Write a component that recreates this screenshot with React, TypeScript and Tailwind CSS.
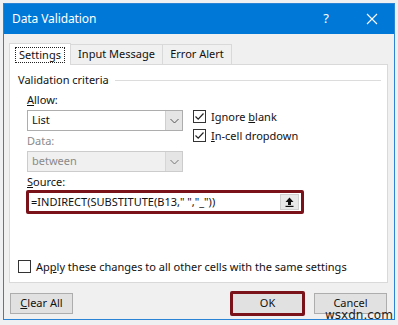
import React from 'react'

const font = { fontFamily: '"Noto Sans", "Open Sans", sans-serif' }

function Check({ checked }: { checked?: boolean }) {
  return (
    <span className="w-[13px] h-[13px] border border-[#333] bg-white flex items-center justify-center shrink-0">
      {checked && (
        <svg width="11" height="11" viewBox="0 0 11 11">
          <path d="M1.5 5.5 L4.2 8.2 L9.5 2.5" fill="none" stroke="#222" strokeWidth="1.2" />
        </svg>
      )}
    </span>
  )
}

function Chevron({ color = '#555' }: { color?: string }) {
  return (
    <svg width="9" height="6" viewBox="0 0 9 6">
      <path d="M0.5 1 L4.5 5 L8.5 1" fill="none" stroke={color} strokeWidth="1" />
    </svg>
  )
}

export default function App() {
  return (
    <div className="w-[398px] h-[325px] bg-[#eef0f2] pt-[3px] pl-[3px] relative text-[11px] text-[#111]" style={font}>
      <div className="w-[392px] h-[317px] border border-[#2b83d6] bg-[#f0f0f0] flex flex-col">
        {/* Title bar */}
        <div className="h-[30px] bg-[#0078d7] text-white flex items-center pl-[8px] shrink-0">
          <span className="text-[12px] tracking-[-0.1px]">Data Validation</span>
          <span className="ml-auto text-[13px] mr-[37px]">?</span>
          <svg width="12" height="12" viewBox="0 0 12 12" className="mr-[16px]">
            <path d="M1 1 L11 11 M11 1 L1 11" stroke="white" strokeWidth="1.1" />
          </svg>
        </div>

        {/* Tabs */}
        <div className="flex ml-[5px] mt-[8px] h-[22px] items-end">
          <div className="h-[22px] w-[62px] bg-white border border-[#d9d9d9] border-b-0 flex items-center justify-center relative z-10 -mb-px">
            <span className="border border-dotted border-[#222] px-[3px] leading-[14px]">Settings</span>
          </div>
          <div className="h-[20px] w-[92px] bg-[#f0f0f0] border border-[#d9d9d9] border-b-0 border-l-0 flex items-center justify-center">
            Input Message
          </div>
          <div className="h-[20px] w-[69px] bg-[#f0f0f0] border border-[#d9d9d9] border-b-0 border-l-0 flex items-center justify-center">
            Error Alert
          </div>
        </div>

        {/* Panel */}
        <div className="ml-[5px] w-[379px] h-[219px] bg-white border border-[#d9d9d9] flex flex-col">
          <div className="flex items-center mt-[7px] pl-[8px] pr-[6px] leading-[16px]">
            <span>Validation criteria</span>
            <div className="flex-1 h-px bg-[#dcdcdc] ml-[6px]" />
          </div>

          <div className="flex pl-[17px] mt-[4px]">
            <div className="w-[156px] flex flex-col">
              <span className="leading-[16px]"><u>A</u>llow:</span>
              <div className="mt-[2px] h-[21px] border border-[#adadad] bg-white flex items-center">
                <span className="flex-1 pl-[4px]">List</span>
                <span className="w-[17px] h-full bg-[#e5e5e5] border-l border-[#cfcfcf] flex items-center justify-center">
                  <Chevron />
                </span>
              </div>
              <span className="leading-[16px] mt-[2px] text-[#8a8a8a]">Data:</span>
              <div className="mt-[2px] h-[21px] border border-[#cccccc] bg-[#f0f0f0] flex items-center">
                <span className="flex-1 pl-[4px] text-[#8a8a8a]">between</span>
                <span className="w-[17px] h-full bg-[#e5e5e5] border-l border-[#d6d6d6] flex items-center justify-center">
                  <Chevron color="#777" />
                </span>
              </div>
            </div>
            <div className="ml-[10px] mt-[18px] flex flex-col gap-[6px]">
              <label className="flex items-center gap-[5px] leading-[13px]">
                <Check checked />
                <span>Ignore <u>b</u>lank</span>
              </label>
              <label className="flex items-center gap-[5px] leading-[13px]">
                <Check checked />
                <span><u>I</u>n-cell dropdown</span>
              </label>
            </div>
          </div>

          <span className="ml-[17px] mt-[2px] leading-[16px]"><u>S</u>ource:</span>
          <div className="ml-[16px] w-[278px] h-[24px] border-[3px] border-[#7a1219] rounded-[2px] bg-white flex items-center">
            <span className="flex-1 pl-[2px] whitespace-nowrap">=INDIRECT(SUBSTITUTE(B13," ","_"))</span>
            <span className="w-[19px] h-[16px] mr-[2px] bg-[#e8e8e8] border border-[#cfcfcf] flex items-center justify-center">
              <svg width="9" height="10" viewBox="0 0 9 10">
                <path d="M4.5 0.5 L8.5 5 L6 5 L6 8 L3 8 L3 5 L0.5 5 Z" fill="#111" />
                <rect x="0.5" y="8.8" width="8" height="1.2" fill="#111" />
              </svg>
            </span>
          </div>

          <label className="mt-auto mb-[9px] ml-[8px] flex items-center gap-[5px] leading-[13px]">
            <Check />
            <span>Ap<u>p</u>ly these changes to all other cells with the same settings</span>
          </label>
        </div>

        {/* Buttons */}
        <div className="flex items-center mt-[8px] ml-[6px]">
          <button className="w-[63px] h-[21px] bg-[#e1e1e1] border border-[#adadad] flex items-center justify-center">
            <span><u>C</u>lear All</span>
          </button>
          <button className="ml-[157px] w-[75px] h-[25px] border-[3px] border-[#7a1219] rounded-[2px] bg-[#e1e1e1] flex items-center justify-center">
            OK
          </button>
          <button className="ml-[9px] w-[73px] h-[21px] bg-[#e1e1e1] border border-[#adadad] flex items-center justify-center">
            Cancel
          </button>
        </div>
      </div>
      <span className="absolute left-[325px] top-[308px] text-[12px] text-[#222] leading-[14px]" style={{ fontFamily: '"DejaVu Sans", sans-serif' }}>
        wsxdn.com
      </span>
    </div>
  )
}
